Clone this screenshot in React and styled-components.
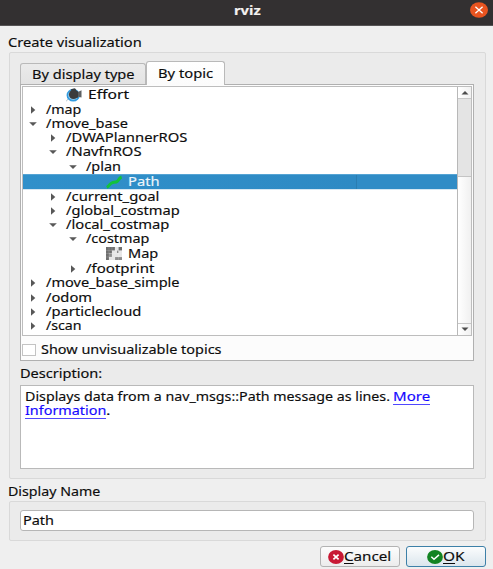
import React, { useLayoutEffect, useRef, useState } from 'react';
import styled, { createGlobalStyle, css } from 'styled-components';

const GlobalStyle = createGlobalStyle`
  * { box-sizing: border-box; }
  html, body { margin: 0; padding: 0; overflow: hidden; background: #efefef; }
`;

const Dialog = styled.main`
  width: 493px;
  height: 569px;
  overflow: hidden;
  display: flex;
  flex-direction: column;
  background: #efefef;
  color: #0c0c0c;
  font: 12.6px/14px 'Noto Sans', 'Open Sans', sans-serif;
`;

const Label = styled.span`
  display: block;
  flex: none;
  width: ${(p) => p.$width}px;
  height: 14px;
  white-space: nowrap;
`;

const Stretch = styled.span`
  display: inline-block;
  transform-origin: 0 50%;
  -webkit-text-stroke: 0.15px currentColor;
`;

/* Text set to an exact width, in the wide proportions of the desktop font. */
function Text({ width, children }) {
  const ref = useRef(null);
  const [scale, setScale] = useState(1);
  useLayoutEffect(() => {
    setScale(width / ref.current.offsetWidth);
  }, [width]);
  return (
    <Label $width={width}>
      <Stretch ref={ref} style={{ transform: `scaleX(${scale})` }}>{children}</Stretch>
    </Label>
  );
}

const TitleBar = styled.header`
  height: 26px;
  flex: none;
  display: grid;
  grid-template-columns: 1fr 27px 1fr;
  align-items: start;
  background: #333031;
  border-bottom: 1px solid #565455;
  color: #f4f2f0;
  font-weight: 700;
  padding: 4px 5px 0 6px;
`;

const CloseButton = styled.button`
  grid-column: 3;
  justify-self: end;
  width: 18px;
  height: 16px;
  margin-top: -2px;
  padding: 0;
  border: 0;
  background: none;
  svg { display: block; }
`;

const Content = styled.div`
  padding: 10px 7px 0 9px;
  display: flex;
  flex-direction: column;
`;

const Group = styled.section`
  margin-top: 2px;
  height: ${(p) => p.$height}px;
  padding: ${(p) => p.$pad};
  border: 1px solid #d9d9d9;
  border-radius: 2px;
  background: #ebebeb;
  display: flex;
  flex-direction: column;
`;

const Tabs = styled.div`
  display: flex;
  align-items: flex-end;
  height: 24px;
`;

const Tab = styled.div`
  display: flex;
  justify-content: center;
  width: ${(p) => p.$width}px;
  height: 21px;
  padding-top: 4px;
  border: 1px solid #b9b9b9;
  border-bottom: 0;
  border-radius: 3px 3px 0 0;
  background: linear-gradient(#ebebeb, #e3e3e3);
  ${(p) => p.$active && css`
    height: 24px;
    margin: 0 0 -1px 0;
    padding-top: 5px;
    z-index: 1;
    background: linear-gradient(#ffffff, #fbfbfb);
  `}
`;

const Pane = styled.div`
  height: 277px;
  border: 1px solid #b0b0b0;
  background: #fcfcfc;
  padding: 1px;
`;

const Tree = styled.div`
  height: 250px;
  border: 1px solid #bdbdbd;
  background: #fff;
  display: flex;
`;

const Rows = styled.div`
  flex: 1;
`;

const Row = styled.div`
  display: flex;
  align-items: center;
  height: ${(p) => (p.$tall ? 15.6 : 14.25)}px;
  padding-left: ${(p) => 6 + p.$level * 20.1}px;
  ${(p) => p.$selected && css`
    background: linear-gradient(to right, #3090ca, #2e8ac4 333px, #2a7db1 333px, #2a7db1 334px, #308cc6 334px);
    box-shadow: inset 0 1px #55a4d4, 0 1px #d6e7f2;
    color: #eef6fb;
  `}
`;

const Slot = styled.span`
  display: flex;
  flex: none;
  width: ${(p) => p.$width}px;
  svg { display: block; }
`;

const ScrollBar = styled.div`
  width: 14px;
  display: flex;
  flex-direction: column;
  border-left: 1px solid #b8b8b8;
  background: #e4e4e4;
`;

const ScrollArrow = styled.div`
  height: 12px;
  display: flex;
  align-items: center;
  justify-content: center;
  background: linear-gradient(to right, #fff, #f1f1f1);
  border: 0 solid #c8c8c8;
  border-width: ${(p) => (p.$end ? '1px 0 0' : '0 0 1px')};
`;

const ScrollTrack = styled.div`
  flex: 1;
  padding-top: 77px;
`;

const ScrollThumb = styled.div`
  height: 100%;
  border-top: 1px solid #c4c4c4;
  background: linear-gradient(to right, #fff, #f0f0f0);
`;

const CheckRow = styled.label`
  display: flex;
  align-items: center;
  gap: 5px;
  padding-top: 7px;
`;

const CheckBox = styled.span`
  width: 14px;
  height: 12px;
  border: 1px solid #c3c3c3;
  background: #fff;
`;

const DescriptionBox = styled.div`
  height: 84px;
  margin-top: 4px;
  padding: 4px 4px;
  border: 1px solid #b9b9b9;
  background: #fff;
`;

const Line = styled.div`
  display: flex;
  height: 14px;
`;

const Link = styled.a`
  color: #1508ff;
  height: 15px;
  margin-left: ${(p) => p.$gap || 0}px;
  border-bottom: 1px solid #5048ff;
`;

const Field = styled.div`
  height: 21px;
  padding: 3px 2px;
  border: 1px solid #b6b6b6;
  border-radius: 3px;
  background: #fff;
`;

const Actions = styled.footer`
  display: flex;
  justify-content: flex-end;
  gap: 6px;
  margin-top: 5px;
`;

const Button = styled.button`
  width: 80px;
  height: 21px;
  display: flex;
  align-items: center;
  justify-content: center;
  padding: 0 1px 0 0;
  color: inherit;
  font: inherit;
  text-align: left;
  border: 1px solid ${(p) => (p.$primary ? '#3d80a8' : '#b3b3b3')};
  border-radius: 3px;
  background: ${(p) => (p.$primary ? 'linear-gradient(#fbfcfd, #dbe6ed)' : 'linear-gradient(#fdfdfd, #ececec)')};
  u { text-underline-offset: 2px; }
  svg { display: block; }
`;

const Caption = styled.div`
  margin-top: ${(p) => p.$top || 0}px;
  margin-left: ${(p) => p.$left || 0}px;
`;

const ArrowRight = () => (
  <svg width="8" height="8"><path d="M2 .3L6.3 4 2 7.7Z" fill="#585858" /></svg>
);
const ArrowDown = () => (
  <svg width="8" height="8"><path d="M.2 2.2H7.8L4 6Z" fill="#585858" /></svg>
);

const EffortIcon = () => (
  <svg width="17" height="14" viewBox="0 0 17 14">
    <path d="M0 13.5L2 11" stroke="#b5c4cc" />
    <ellipse cx="7.2" cy="7.2" rx="5.9" ry="5.6" fill="#8fc4e6" stroke="#319be0" strokeWidth="1.5" />
    <ellipse cx="7.5" cy="6.4" rx="4.6" ry="4.6" fill="#3b3c3e" />
    <path d="M5 1.2L9 .3 11 3.2H12V9.8H7Z" fill="#3b3c3e" />
    <path d="M12 4L15.5 2.3V9.5L12 8.7Z" fill="#5c6063" />
  </svg>
);

const PathIcon = () => (
  <svg width="17" height="14" viewBox="0 0 17 14">
    <path d="M.8 12.3C3.6 11 3.4 8.8 6 7.8C8 7.1 9.6 7.6 11.4 6.2C13.2 4.8 12.6 3 15.6 2" fill="none" stroke="#12c23c" strokeWidth="3" />
  </svg>
);

const MapIcon = () => (
  <svg width="16" height="14" viewBox="0 0 16 14">
    <path fill="#e6e6e6" d="M0 0H16V13H0Z" />
    <path fill="#6f6f6f" d="M0 0H9V3.5H6V6.5H3V13H0ZM12.5 0H16V3.5H12.5Z" />
    <path fill="#8d8d8d" d="M3 6.5H6V10H3ZM9 10H16V13H9ZM11 3.5H12.5V6H11Z" />
    <path stroke="#fff" strokeOpacity=".3" strokeWidth=".5" d="M3 0V13M6 0V13M9 0V13M12.5 0V13M0 3.5H16M0 6.5H16M0 10H16" />
  </svg>
);

const CancelIcon = () => (
  <svg width="16" height="14" viewBox="0 0 16 14">
    <ellipse cx="8" cy="7" rx="7.9" ry="6.9" fill="#c81834" />
    <path d="M5.4 4.6L10.6 9.4M10.6 4.6L5.4 9.4" stroke="#fff" strokeWidth="1.7" />
  </svg>
);

const OkIcon = () => (
  <svg width="16" height="14" viewBox="0 0 16 14">
    <ellipse cx="8" cy="7" rx="7.9" ry="6.9" fill="#138423" />
    <path d="M4.3 6.8L7 9.3 12 4.9" fill="none" stroke="#fff" strokeWidth="1.5" />
  </svg>
);

const topics = [
  { label: 'Effort', width: 41, level: 1, icon: EffortIcon },
  { label: '/map', width: 35, level: 0, arrow: ArrowRight },
  { label: '/move_base', width: 82, level: 0, arrow: ArrowDown },
  { label: '/DWAPlannerROS', width: 121, level: 1, arrow: ArrowRight },
  { label: '/NavfnROS', width: 75, level: 1, arrow: ArrowDown },
  { label: '/plan', width: 35.5, level: 2, arrow: ArrowDown },
  { label: 'Path', width: 31.5, level: 3, icon: PathIcon, selected: true },
  { label: '/current_goal', width: 93, level: 1, arrow: ArrowRight },
  { label: '/global_costmap', width: 114, level: 1, arrow: ArrowRight },
  { label: '/local_costmap', width: 103, level: 1, arrow: ArrowDown },
  { label: '/costmap', width: 64, level: 2, arrow: ArrowDown },
  { label: 'Map', width: 30, level: 3, icon: MapIcon },
  { label: '/footprint', width: 68, level: 2, arrow: ArrowRight },
  { label: '/move_base_simple', width: 134, level: 0, arrow: ArrowRight },
  { label: '/odom', width: 45.5, level: 0, arrow: ArrowRight },
  { label: '/particlecloud', width: 95, level: 0, arrow: ArrowRight },
  { label: '/scan', width: 36, level: 0, arrow: ArrowRight },
];

function TopicRow({ label, width, level, icon: Icon, arrow: Arrow, selected }) {
  return (
    <Row $level={Icon ? level + 0.85 : level} $tall={!!Icon} $selected={selected}>
      <Slot $width={Icon ? 21.5 : 17}>{Icon ? <Icon /> : <Arrow />}</Slot>
      <Text width={width}>{label}</Text>
    </Row>
  );
}

export default function App() {
  return (
    <Dialog>
      <GlobalStyle />
      <TitleBar>
        <span />
        <Text width={27}>rviz</Text>
        <CloseButton aria-label="Close">
          <svg width="18" height="16" viewBox="0 0 18 16">
            <ellipse cx="9" cy="8" rx="9" ry="7.8" fill="#e95420" />
            <path d="M5.4 4.8L12.6 11.2M12.6 4.8L5.4 11.2" stroke="#fff" strokeWidth="1.3" />
          </svg>
        </CloseButton>
      </TitleBar>
      <Content>
        <Caption $left={-1}><Text width={133.5}>Create visualization</Text></Caption>
        <Group $height={427} $pad="7px 11px 0 10px">
          <Tabs>
            <Tab $width={126}><Text width={102}>By display type</Text></Tab>
            <Tab $width={79} $active><Text width={55}>By topic</Text></Tab>
          </Tabs>
          <Pane>
            <Tree>
              <Rows>
                {topics.map((t) => <TopicRow key={t.label} {...t} />)}
              </Rows>
              <ScrollBar>
                <ScrollArrow>
                  <svg width="8" height="5"><path d="M.5 4.5H7.5L4 1Z" fill="#4d4d4d" /></svg>
                </ScrollArrow>
                <ScrollTrack><ScrollThumb /></ScrollTrack>
                <ScrollArrow $end>
                  <svg width="8" height="5"><path d="M.5 .5H7.5L4 4Z" fill="#4d4d4d" /></svg>
                </ScrollArrow>
              </ScrollBar>
            </Tree>
            <CheckRow>
              <CheckBox />
              <Text width={180}>Show unvisualizable topics</Text>
            </CheckRow>
          </Pane>
          <Caption $top={6}><Text width={82}>Description:</Text></Caption>
          <DescriptionBox>
            <Line>
              <Text width={365}>Displays data from a nav_msgs::Path message as lines.</Text>
              <Link $gap={3}><Text width={37}>More</Text></Link>
            </Line>
            <Line>
              <Link><Text width={81}>Information</Text></Link>
              <Text width={4}>.</Text>
            </Line>
          </DescriptionBox>
        </Group>
        <Caption $top={6} $left={-1}><Text width={92.5}>Display Name</Text></Caption>
        <Group $height={40} $pad="8px 11px 0 10px">
          <Field><Text width={31}>Path</Text></Field>
        </Group>
        <Actions>
          <Button><CancelIcon /><Text width={47}><u>C</u>ancel</Text></Button>
          <Button $primary><OkIcon /><Text width={22}><u>O</u>K</Text></Button>
        </Actions>
      </Content>
    </Dialog>
  );
}
